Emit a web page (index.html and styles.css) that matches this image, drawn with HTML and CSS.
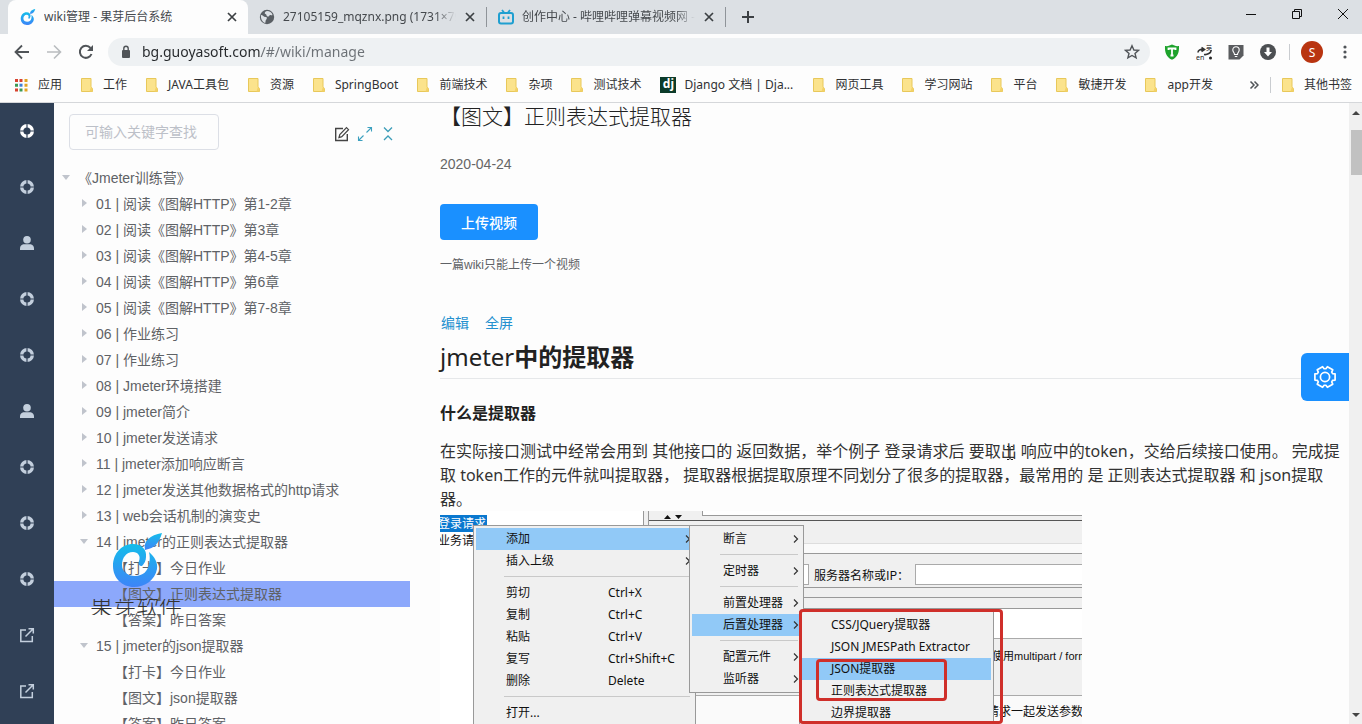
FILE: index.html
```
<!DOCTYPE html>
<html lang="zh-CN">
<head>
<meta charset="utf-8">
<title>wiki管理 - 果芽后台系统</title>
<link rel="stylesheet" href="styles.css">
</head>
<body>
<svg class="defs" aria-hidden="true">
  <defs>
    <linearGradient id="leaf" x1="0" y1="0" x2="0" y2="1"><stop offset="0" stop-color="#14bdea"/><stop offset="1" stop-color="#3d84f8"/></linearGradient>
    <symbol id="i-close" viewBox="0 0 12 12"><path d="M2 2l8 8M10 2l-8 8" stroke="currentColor" stroke-width="1.7" fill="none"/></symbol>
    <symbol id="i-logo" viewBox="0 0 49 54">
      <path d="M36 19C42 24 45 30 44 36C42 47 32 54 21 54C9 54 0 45 0 33C0 20 9 11 20 11C29 11 34 17 33 24C33 28 31 31 29 33C26 33 25 31 26 28C28 23 25 19 20 19C13 19 9 25 9 32C9 39 15 43 22 43C30 43 35 38 36 31C37 27 37 23 36 19Z" fill="url(#leaf)"/>
      <path d="M32 17C30 8 37 2 49 0C46 10 42 15 32 17Z" fill="url(#leaf)"/>
    </symbol>
    <symbol id="i-folder" viewBox="0 0 12 14"><path d="M.5.5h9.500v8l1.500 2.500v2.500H.5z" fill="#fbe38c" stroke="#e8c85a"/><path d="M8.500 13.500l1.500-5 1.500 2.500v2.500z" fill="#f3d268"/></symbol>
    <symbol id="i-ring" viewBox="0 0 16 16"><circle cx="8" cy="8" r="5.300" fill="none" stroke="currentColor" stroke-width="3.400"/><path d="M8 .5v5M8 10.500v5M.5 8h5M10.500 8h5" stroke="#304056" stroke-width="1.200"/></symbol>
    <symbol id="i-user" viewBox="0 0 16 16"><circle cx="8" cy="4.800" r="3.800" fill="currentColor"/><path d="M1 15v-1.500C1 10.500 3.500 9.300 5 9.300h6c1.500 0 4 1.200 4 4.200V15z" fill="currentColor"/></symbol>
    <symbol id="i-out" viewBox="0 0 16 16"><path d="M7 3H1.800v11.500h11.500V9M6.500 9.500L14 2M9.500 1.700h4.800v4.800" fill="none" stroke="currentColor" stroke-width="1.500"/></symbol>
    <symbol id="i-chev" viewBox="0 0 6 10"><path d="M1 1.500l3.500 3.500L1 8.500" fill="none" stroke="#333" stroke-width="1.200"/></symbol>
  </defs>
</svg>

<header class="browser">
  <nav class="tabs" aria-label="标签页">
    <div class="tab tab-active">
      <svg class="ico16"><use href="#i-logo"/></svg>
      <span class="tab-title">wiki管理 - 果芽后台系统</span>
      <button class="tab-close" aria-label="关闭"><svg class="ico12"><use href="#i-close"/></svg></button>
    </div>
    <div class="tab">
      <svg class="ico16" viewBox="0 0 16 16"><circle cx="8" cy="8" r="7.200" fill="#5a5f64"/><path d="M2 6c2 0 2.500 2 4.500 2s1.500 2 .5 3-0 2.500-1 3C3.500 13 1.500 10 2 6zM8 2c2.500 0 5 1.500 5.500 4-1 1-1.500-.5-2.500 0s-1 2-2.500 1.500S8 5.500 6.500 5 6 2.500 8 2z" fill="#dde1e5"/></svg>
      <span class="tab-title fade">27105159_mqznx.png (1731×793)</span>
      <button class="tab-close" aria-label="关闭"><svg class="ico12"><use href="#i-close"/></svg></button>
    </div>
    <div class="tab">
      <svg class="ico16" viewBox="0 0 16 16"><rect x="1" y="4" width="14" height="10.500" rx="2" fill="none" stroke="#1f9fd0" stroke-width="2"/><path d="M4 1l2 2.500M12 1l-2 2.500M5.500 7.500v2.500M10.500 7.500v2.500" stroke="#1f9fd0" stroke-width="1.800"/></svg>
      <span class="tab-title fade">创作中心 - 哔哩哔哩弹幕视频网 - ( ゜</span>
      <button class="tab-close" aria-label="关闭"><svg class="ico12"><use href="#i-close"/></svg></button>
    </div>
    <button class="newtab" aria-label="新标签页"><svg class="ico14" viewBox="0 0 14 14"><path d="M7 1v12M1 7h12" stroke="#3c4043" stroke-width="2"/></svg></button>
    <div class="window-buttons">
      <button aria-label="最小化"><svg class="ico12" viewBox="0 0 12 12"><path d="M1 6.500h10" stroke="#111"/></svg></button>
      <button aria-label="还原"><svg class="ico12" viewBox="0 0 12 12"><path d="M1.500 3.500h7v7h-7zM3.500 3.500v-2h7v7h-2" fill="none" stroke="#111"/></svg></button>
      <button aria-label="关闭窗口"><svg class="ico12" viewBox="0 0 12 12"><path d="M1 1l10 10M11 1L1 11" stroke="#111"/></svg></button>
    </div>
  </nav>

  <div class="toolbar">
    <button aria-label="后退"><svg class="ico16" viewBox="0 0 16 16"><path d="M15 8H2M8 1.500L1.500 8 8 14.500" fill="none" stroke="#505458" stroke-width="1.800"/></svg></button>
    <button aria-label="前进"><svg class="ico16" viewBox="0 0 16 16"><path d="M1 8h13M8 1.500L14.500 8 8 14.500" fill="none" stroke="#b9bcbf" stroke-width="1.600"/></svg></button>
    <button aria-label="重新加载"><svg class="ico16" viewBox="0 0 16 16"><path d="M13.500 10A6 6 0 1 1 12.500 4" fill="none" stroke="#505458" stroke-width="2"/><path d="M15 1v6H9z" fill="#505458"/></svg></button>
    <div class="omnibox">
      <svg class="lock" viewBox="0 0 10 14"><rect x="1" y="5" width="8" height="8" rx="1" fill="#505458"/><path d="M2.800 5.500V3.500a2.200 2.200 0 0 1 4.400 0v2" fill="none" stroke="#505458" stroke-width="1.400"/></svg>
      <input class="url" type="text" aria-label="地址" value="bg.guoyasoft.com/#/wiki/manage">
      <button aria-label="收藏"><svg class="ico16" viewBox="0 0 16 16"><path d="M8 1.800l1.900 4.200 4.600.4-3.500 3 1.100 4.500L8 11.500l-4.100 2.400L5 9.400l-3.500-3 4.600-.4z" fill="none" stroke="#505458" stroke-width="1.400"/></svg></button>
    </div>
    <div class="extensions">
      <button aria-label="扩展 T"><svg class="ico16" viewBox="0 0 16 16"><path d="M1 2c3 .5 5-.5 7-1.500C10 1.500 12 2.500 15 2c.3 6-1 11-7 13.800C2 13 .7 8 1 2z" fill="#1ea32c"/><path d="M4.500 6v-1.500h7V6M8 4v7.500M6.500 11.500h3" fill="none" stroke="#fff" stroke-width="1.800"/></svg></button>
      <button aria-label="翻译"><svg class="ico16" viewBox="0 0 16 16"><path d="M2 8.500c0-2 2-3.500 5-3M5.500 3.500l3 2-3 2M15 6c.5 3-4 5-7 4.500" fill="none" stroke="#333" stroke-width="1.600"/><circle cx="14.500" cy="14" r="1.500" fill="#222"/><text x="0" y="15.500" font-size="7" font-family="Noto Sans" fill="#222">en</text><text x="10" y="6" font-size="6" font-family="Noto Sans CJK SC" fill="#222">英</text></svg></button>
      <button aria-label="灯泡"><svg class="ico16" viewBox="0 0 16 16"><path d="M.5 1h15v10.500L11.500 15.500H.5z" fill="#5a5c5f"/><path d="M6.500 10.500C6.500 8.500 4.800 8 4.800 6a3.200 3.200 0 0 1 6.400 0c0 2-1.700 2.500-1.700 4.500zM6.800 12.500h2.500" fill="none" stroke="#fff" stroke-width="1.100"/></svg></button>
      <button aria-label="下载"><svg class="ico16" viewBox="0 0 16 16"><circle cx="8" cy="8" r="8" fill="#4c4f52"/><path d="M6.500 3.500h3V8H12l-4 4.500L4 8h2.500z" fill="#fff"/></svg></button>
    </div>
    <span class="divider"></span>
    <button class="avatar" aria-label="账户">S</button>
    <button aria-label="菜单"><svg class="ico16" viewBox="0 0 16 16"><circle cx="8" cy="3" r="1.600" fill="#505458"/><circle cx="8" cy="8" r="1.600" fill="#505458"/><circle cx="8" cy="13" r="1.600" fill="#505458"/></svg></button>
  </div>

  <nav class="bookmarks" aria-label="书签">
    <a href="#"><svg class="ico14" viewBox="0 0 14 14"><path d="M1 2.500h3M1 12h3" stroke="#d8432f" stroke-width="3"/><path d="M5.500 2.500h3" stroke="#d8432f" stroke-width="3"/><path d="M10.500 2.500h3M10.500 7.200h3" stroke="#e2a424" stroke-width="3"/><path d="M1 7.200h3M5.500 12h3" stroke="#3c9a54" stroke-width="3"/><path d="M5.500 7.200h3" stroke="#3f7fd8" stroke-width="3"/><path d="M10.500 12h3" stroke="#e2a424" stroke-width="3"/></svg>应用</a>
    <a href="#"><svg class="folder"><use href="#i-folder"/></svg>工作</a>
    <a href="#"><svg class="folder"><use href="#i-folder"/></svg>JAVA工具包</a>
    <a href="#"><svg class="folder"><use href="#i-folder"/></svg>资源</a>
    <a href="#"><svg class="folder"><use href="#i-folder"/></svg>SpringBoot</a>
    <a href="#"><svg class="folder"><use href="#i-folder"/></svg>前端技术</a>
    <a href="#"><svg class="folder"><use href="#i-folder"/></svg>杂项</a>
    <a href="#"><svg class="folder"><use href="#i-folder"/></svg>测试技术</a>
    <a class="django" href="#"><span class="dj">dj</span>Django 文档 | Dja...</a>
    <a href="#"><svg class="folder"><use href="#i-folder"/></svg>网页工具</a>
    <a href="#"><svg class="folder"><use href="#i-folder"/></svg>学习网站</a>
    <a href="#"><svg class="folder"><use href="#i-folder"/></svg>平台</a>
    <a href="#"><svg class="folder"><use href="#i-folder"/></svg>敏捷开发</a>
    <a href="#"><svg class="folder"><use href="#i-folder"/></svg>app开发</a>
    <div class="bookmarks-end">
      <button aria-label="更多书签"><svg class="ico10" viewBox="0 0 10 10"><path d="M1.500 1.500L5 5 1.500 8.500M5.500 1.500L9 5 5.500 8.500" fill="none" stroke="#505458" stroke-width="1.500"/></svg></button>
      <span class="divider"></span>
      <a href="#"><svg class="folder"><use href="#i-folder"/></svg>其他书签</a>
    </div>
  </nav>
</header>

<div class="page">
  <nav class="rail" aria-label="主菜单">
    <a class="current" href="#" aria-label="首页"><svg class="ico16"><use href="#i-ring"/></svg></a>
    <a href="#" aria-label="课程"><svg class="ico16"><use href="#i-ring"/></svg></a>
    <a href="#" aria-label="用户"><svg class="ico16"><use href="#i-user"/></svg></a>
    <a href="#" aria-label="班级"><svg class="ico16"><use href="#i-ring"/></svg></a>
    <a href="#" aria-label="题库"><svg class="ico16"><use href="#i-ring"/></svg></a>
    <a href="#" aria-label="学员"><svg class="ico16"><use href="#i-user"/></svg></a>
    <a href="#" aria-label="作业"><svg class="ico16"><use href="#i-ring"/></svg></a>
    <a href="#" aria-label="文档"><svg class="ico16"><use href="#i-ring"/></svg></a>
    <a href="#" aria-label="系统"><svg class="ico16"><use href="#i-ring"/></svg></a>
    <a href="#" aria-label="外链一"><svg class="ico16"><use href="#i-out"/></svg></a>
    <a href="#" aria-label="外链二"><svg class="ico16"><use href="#i-out"/></svg></a>
  </nav>

  <aside class="catalog">
    <div class="search-row">
      <input class="search" type="text" placeholder="可输入关键字查找" aria-label="可输入关键字查找">
      <div class="tools">
        <button aria-label="编辑目录"><svg class="ico16" viewBox="0 0 16 16"><path d="M9 2.500H1.700v12h11.600V8" fill="none" stroke="#444" stroke-width="1.400"/><path d="M5 11.500l.8-3L12.500 1.700l2 2-6.700 6.900z" fill="none" stroke="#444" stroke-width="1.200"/></svg></button>
        <button aria-label="全部展开"><svg class="ico16" viewBox="0 0 16 16"><path d="M9.500 6.500L14.500 1.500M10.500 1.500h4v4M6.500 9.500L1.500 14.500M1.500 10.500v4h4" fill="none" stroke="#3ca0bf" stroke-width="1.100"/></svg></button>
        <button aria-label="全部收起"><svg class="ico16" viewBox="0 0 16 16"><path d="M4 1.500l4 4 4-4M4 14l4-4 4 4" fill="none" stroke="#3c9db8" stroke-width="1.300"/></svg></button>
      </div>
    </div>
    <ul class="tree">
      <li class="row"><button class="caret open" aria-label="收起"></button>《Jmeter训练营》</li>
      <li class="row l1"><button class="caret" aria-label="展开"></button>01 | 阅读《图解HTTP》第1-2章</li>
      <li class="row l1"><button class="caret" aria-label="展开"></button>02 | 阅读《图解HTTP》第3章</li>
      <li class="row l1"><button class="caret" aria-label="展开"></button>03 | 阅读《图解HTTP》第4-5章</li>
      <li class="row l1"><button class="caret" aria-label="展开"></button>04 | 阅读《图解HTTP》第6章</li>
      <li class="row l1"><button class="caret" aria-label="展开"></button>05 | 阅读《图解HTTP》第7-8章</li>
      <li class="row l1"><button class="caret" aria-label="展开"></button>06 | 作业练习</li>
      <li class="row l1"><button class="caret" aria-label="展开"></button>07 | 作业练习</li>
      <li class="row l1"><button class="caret" aria-label="展开"></button>08 | Jmeter环境搭建</li>
      <li class="row l1"><button class="caret" aria-label="展开"></button>09 | jmeter简介</li>
      <li class="row l1"><button class="caret" aria-label="展开"></button>10 | jmeter发送请求</li>
      <li class="row l1"><button class="caret" aria-label="展开"></button>11 | jmeter添加响应断言</li>
      <li class="row l1"><button class="caret" aria-label="展开"></button>12 | jmeter发送其他数据格式的http请求</li>
      <li class="row l1"><button class="caret" aria-label="展开"></button>13 | web会话机制的演变史</li>
      <li class="row l1"><button class="caret open" aria-label="收起"></button>14 | jmeter的正则表达式提取器</li>
      <li class="row l2">【打卡】今日作业</li>
      <li class="row l2 selected">【图文】正则表达式提取器</li>
      <li class="row l2">【答案】昨日答案</li>
      <li class="row l1"><button class="caret open" aria-label="收起"></button>15 | jmeter的json提取器</li>
      <li class="row l2">【打卡】今日作业</li>
      <li class="row l2">【图文】json提取器</li>
      <li class="row l2">【答案】昨日答案</li>
    </ul>
    <div class="watermark">
      <svg class="mark"><use href="#i-logo"/></svg>
      <span class="mark-name">果芽软件</span>
    </div>
  </aside>

  <main class="article">
    <h1 class="title">【图文】正则表达式提取器</h1>
    <p class="date">2020-04-24</p>
    <button class="upload">上传视频</button>
    <p class="hint">一篇wiki只能上传一个视频</p>
    <div class="links"><a href="#">编辑</a><a href="#">全屏</a></div>
    <h2 class="heading"><span class="latin">jmeter</span>中的提取器</h2>
    <h3 class="subheading">什么是提取器</h3>
    <p class="body">在实际接口测试中经常会用到 其他接口的 返回数据，举个例子 登录请求后 要取出 响应中的token，交给后续接口使用。 完成提取 token工作的元件就叫提取器， 提取器根据提取原理不同划分了很多的提取器，最常用的 是 正则表达式提取器 和 json提取器。</p>

    <div class="shot">
      <div class="plan"><span class="plan-on">登录请求</span><span>业务请求</span></div>
      <div class="split"></div>
      <div class="form">
        <div class="form-top"><svg class="sorts" viewBox="0 0 20 6"><path d="M1 5l3.500-4L8 5zM12 1h7l-3.500 4z" fill="#111"/></svg><span class="form-top-field"></span></div>
        <div class="band band-a"></div>
        <div class="band band-gap"></div>
        <div class="band band-server">
          <input class="port" type="text" aria-label="协议">
          <label for="ip">服务器名称或IP：</label>
          <input class="ip" id="ip" type="text">
        </div>
        <div class="band band-b"></div>
        <div class="band band-c"></div>
        <div class="band band-white"></div>
        <div class="band band-multi">使用multipart / form-data</div>
        <div class="band band-params">请求一起发送参数:</div>
      </div>

      <div class="menu menu-1">
        <div class="item on">添加<svg class="chev"><use href="#i-chev"/></svg></div>
        <div class="item">插入上级<svg class="chev"><use href="#i-chev"/></svg></div>
        <hr>
        <div class="item">剪切<kbd>Ctrl+X</kbd></div>
        <div class="item">复制<kbd>Ctrl+C</kbd></div>
        <div class="item">粘贴<kbd>Ctrl+V</kbd></div>
        <div class="item">复写<kbd>Ctrl+Shift+C</kbd></div>
        <div class="item">删除<kbd>Delete</kbd></div>
        <hr>
        <div class="item">打开...</div>
      </div>
      <div class="menu menu-2">
        <div class="item">断言<svg class="chev"><use href="#i-chev"/></svg></div>
        <hr>
        <div class="item">定时器<svg class="chev"><use href="#i-chev"/></svg></div>
        <hr>
        <div class="item">前置处理器<svg class="chev"><use href="#i-chev"/></svg></div>
        <div class="item on">后置处理器<svg class="chev"><use href="#i-chev"/></svg></div>
        <hr>
        <div class="item">配置元件<svg class="chev"><use href="#i-chev"/></svg></div>
        <div class="item">监听器<svg class="chev"><use href="#i-chev"/></svg></div>
      </div>
      <div class="menu menu-3">
        <div class="item">CSS/JQuery提取器</div>
        <div class="item">JSON JMESPath Extractor</div>
        <div class="item on">JSON提取器</div>
        <div class="item">正则表达式提取器</div>
        <div class="item">边界提取器</div>
      </div>
      <div class="frame frame-outer"></div>
      <div class="frame frame-inner"></div>
    </div>
  </main>

  <div class="scrollbar"><svg class="scroll-up" viewBox="0 0 8 5"><path d="M0 5l4-4 4 4z" fill="#444"/></svg><div class="thumb"></div><svg class="scroll-down" viewBox="0 0 8 5"><path d="M0 0l4 4 4-4z" fill="#444"/></svg></div>

  <button class="settings" aria-label="设置"><svg class="gear" viewBox="0 0 24 24"><path d="M22.100 8.900V15.100L19.600 15.400 18.700 16.900 19.750 19.200 14.400 22.300 12.900 20.250H11.100L9.600 22.300 4.250 19.200 5.300 16.900 4.400 15.400 1.900 15.100V8.900L4.400 8.600 5.300 7.100 4.250 4.800 9.600 1.700 11.100 3.750H12.900L14.400 1.700 19.750 4.800 18.700 7.100 19.600 8.600Z" fill="none" stroke="#fff" stroke-width="1.700" stroke-linejoin="round"/><circle cx="12" cy="12" r="4.600" fill="none" stroke="#fff" stroke-width="1.700"/></svg></button>
  <svg class="ibeam" viewBox="0 0 8 16"><path d="M1 1.500h2l1 1 1-1h2M4 2.500v11M1 14.500h2l1-1 1 1h2" fill="none" stroke="#222"/></svg>
</div>
</body>
</html>
```

FILE: styles.css
```
* { box-sizing: border-box; }

body {
  margin: 0;
  height: 100vh;
  display: flex;
  flex-direction: column;
  overflow: hidden;
  background: #fdfdfd;
  color: #303133;
  font-family: "Noto Sans", "Noto Sans CJK SC", sans-serif;
  font-size: 12px;
}

button {
  border: 0;
  padding: 0;
  background: none;
  font: inherit;
  color: inherit;
  display: flex;
  align-items: center;
  justify-content: center;
}

a { text-decoration: none; color: inherit; }
h1, h2, h3, p, ul { margin: 0; padding: 0; }

.defs { position: absolute; width: 0; height: 0; }
.ico10 { width: 10px; height: 10px; }
.ico12 { width: 12px; height: 12px; }
.ico14 { width: 14px; height: 14px; }
.ico16 { width: 16px; height: 16px; flex: none; }

/* browser chrome */
.browser { flex: none; border-bottom: 1px solid #d5d7da; }

.tabs {
  display: flex;
  height: 34px;
  padding-left: 8px;
  background: #dce0e4;
  color: #45494d;
}

.tab {
  display: flex;
  align-items: center;
  gap: 8px;
  width: 239px;
  height: 20px;
  margin-top: 7px;
  padding: 0 10px 0 11px;
  border-right: 1px solid #8f9499;
}
.tab-active {
  width: 240px;
  height: 34px;
  margin-top: 0;
  padding-left: 12px;
  border: 0;
  border-radius: 8px 8px 0 0;
  background: #fdfdfd;
}
.tab-title { flex: 1; overflow: hidden; white-space: nowrap; line-height: 20px; }
.fade { mask-image: linear-gradient(to right, #000 88%, transparent); }
.tab-close { color: #3c4043; }
.newtab { width: 44px; }
.window-buttons { display: flex; margin: 0 -4px 0 auto; height: 28px; }
.window-buttons button { width: 46px; }

.toolbar {
  display: flex;
  align-items: center;
  gap: 16px;
  height: 36px;
  padding: 0 9px 0 14px;
}
.omnibox {
  flex: 1;
  display: flex;
  align-items: center;
  gap: 11px;
  height: 28px;
  margin: 0 -2px;
  padding: 0 10px 0 13px;
  border-radius: 14px;
  background: #eef1f3;
}
.lock { width: 10px; height: 14px; }
.url {
  flex: 1;
  border: 0;
  padding: 0;
  font-family: "Noto Sans", sans-serif;
  font-size: 14px;
  line-height: 20px;
  color: #6b7075;
  -webkit-text-fill-color: transparent;
  background: linear-gradient(to right, #25282b 119px, #6b7075 119px);
  -webkit-background-clip: text;
  background-clip: text;
}
.extensions { display: flex; gap: 16px; }
.divider { width: 1px; height: 16px; background: #c9ccd0; }
.toolbar .divider { margin: 0 -5px 0 -3px; }
.avatar {
  width: 22px;
  height: 22px;
  margin-right: -2px;
  border-radius: 50%;
  background: #b93410;
  color: #fff;
}

.bookmarks {
  display: flex;
  align-items: center;
  gap: 19px;
  height: 32px;
  padding: 0 10px 3px 14px;
  white-space: nowrap;
}
.bookmarks a { display: flex; align-items: center; gap: 10px; line-height: 20px; }
.folder { width: 12px; height: 14px; flex: none; }
.django { width: 134px; }
.bookmarks .django { gap: 8px; }
.dj {
  width: 16px;
  height: 16px;
  background: #0c3b2a;
  color: #fff;
  font-weight: 700;
  line-height: 14px;
  text-align: center;
}
.bookmarks-end { display: flex; align-items: center; gap: 11px; margin-left: auto; }

/* application */
.page { position: relative; flex: 1; min-height: 0; display: flex; }

.rail { flex: none; width: 54px; background: #304056; color: #c3cfdd; overflow: hidden; }
.rail a { display: flex; align-items: center; justify-content: center; height: 56px; }
.rail .current { color: #fff; }

.catalog {
  position: relative;
  flex: none;
  width: 356px;
  overflow: hidden;
  color: #5f6266;
  font-family: "Liberation Sans", "Noto Sans CJK SC", sans-serif;
  font-size: 14px;
}
.search-row { display: flex; justify-content: space-between; padding: 11px 14px 15px 15px; }
.search {
  width: 150px;
  height: 36px;
  padding: 0 15px;
  border: 1px solid #dcdfe6;
  border-radius: 4px;
  background: none;
  font: inherit;
}
.search::placeholder { color: #bcc0c8; opacity: 1; }
.tools { display: flex; align-items: center; gap: 7px; padding-top: 4px; }

.tree { list-style: none; }
.row { display: flex; align-items: center; height: 26px; padding-bottom: 2px; white-space: nowrap; }
.l1 { padding-left: 18px; }
.l2 { padding-left: 60px; }
.selected { background: #8ca8fb; }
.caret { width: 24px; height: 24px; }
.caret::before {
  content: "";
  border: 4px solid transparent;
  border-left: 5px solid #c0c4cc;
  border-right: 0;
}
.caret.open::before {
  border: 4px solid transparent;
  border-top: 5px solid #c0c4cc;
  border-bottom: 0;
}

.watermark { position: absolute; left: 36px; top: 430px; display: flex; flex-direction: column; }
.mark { width: 49px; height: 54px; margin-left: 23px; }
.mark-name {
  height: 16px;
  margin-top: 12px;
  overflow: hidden;
  color: #333;
  font-size: 23px;
  font-weight: 300;
  line-height: 16px;
}

.article { flex: 1; min-width: 0; padding: 0 4px 0 30px; overflow: hidden; }
.title { font-size: 21px; line-height: 26px; font-weight: 300; color: #222; }
.date, .hint, .upload, .links { font-family: "Liberation Sans", "Noto Sans CJK SC", sans-serif; }
.date { margin-top: 25px; font-size: 14px; line-height: 20px; color: #666; }
.upload {
  height: 36px;
  margin-top: 30px;
  padding: 0 21px;
  border-radius: 4px;
  background: #1a90ff;
  color: #fff;
  font-size: 14px;
  font-weight: 500;
}
.hint { margin-top: 15px; line-height: 20px; color: #5f6266; }
.links { display: flex; gap: 16px; margin-top: 37px; padding-left: 1px; font-size: 14px; line-height: 22px; color: #2490cf; }
.heading {
  margin-top: 6px;
  padding-bottom: 4px;
  border-bottom: 1px solid #e6e8ea;
  font-size: 24px;
  line-height: 34px;
  color: #222;
}
.latin { font-weight: 400; -webkit-text-stroke: 0 #222; }
.subheading { margin-top: 22px; font-size: 16px; line-height: 24px; color: #222; }
.body { margin-top: 14px; font-size: 16px; line-height: 24px; color: #333; }

/* captured JMeter window: panes below, free-floating menus above */
.shot {
  position: relative;
  display: flex;
  width: 642px;
  height: 214px;
  overflow: hidden;
  background: #fff;
  color: #111;
}
.plan { width: 203px; padding-top: 4px; display: flex; flex-direction: column; align-items: flex-start; }
.plan span { line-height: 17px; text-indent: -2px; overflow: hidden; }
.plan .plan-on { width: 47px; background: #0a78cf; color: #fff; }
.split { width: 6px; border: solid #999; border-width: 0 1px; background: #f0f0f0; }
.form { flex: 1; min-width: 0; background: #f0f0f0; white-space: nowrap; }
.form-top { display: flex; height: 10px; padding-left: 14px; border-bottom: 1px solid #555; }
.sorts { width: 20px; height: 6px; margin-top: 3px; }
.form-top-field { flex: 1; height: 5px; margin-left: 19px; background: #fff; border: solid #999; border-width: 0 0 1px 1px; }
.band-a { height: 23px; border-bottom: 1px solid #ddd; }
.band-gap { height: 10px; background: #fafafa; border-bottom: 1px solid #999; }
.band-server {
  display: flex;
  align-items: center;
  height: 34px;
  padding: 8px 0 0 60px;
  border-bottom: 1px solid #999;
  font-family: "Noto Sans CJK SC", sans-serif;
}
.band-server input { height: 21px; border: 1px solid #aaa; background: #fff; padding: 0; }
.port { width: 100px; margin-right: 5px; }
.ip { flex: 1; min-width: 0; border-right: 0; }
.band-server .ip { border-right: 0; }
.band-server label { width: 101px; }
.band-b { height: 10px; border-bottom: 1px solid #999; }
.band-c { height: 11px; border-bottom: 1px solid #999; }
.band-white { height: 30px; background: #fff; border-bottom: 1px solid #aaa; }
.band-multi {
  height: 57px;
  padding: 7px 0 0 343px;
  border-bottom: 1px solid #aaa;
  font-family: "Liberation Sans", "Noto Sans CJK SC", sans-serif;
  font-size: 11px;
  line-height: 20px;
}
.band-params { height: 30px; padding: 6px 0 0 338px; background: #fafafa; line-height: 20px; }

.menu { position: absolute; padding: 2px; border: 1px solid #999; background: #f0f0f0; }
.menu-1 { left: 33px; top: 14px; width: 223px; }
.menu-2 { left: 249px; top: 14px; width: 115px; }
.menu-3 { left: 359px; top: 100px; width: 195px; }
.item { display: flex; align-items: center; height: 22px; padding-left: 30px; line-height: 22px; white-space: nowrap; }
.menu-1 .on { width: 216px; }
.menu-2 .item, .menu-1 .item { justify-content: space-between; }
.menu-2 .item { padding: 0 2px 0 31px; }
.menu-3 .item { padding-left: 29px; }
.menu-1 .item { padding-right: 2px; }
.menu-1 .on { padding-right: 1px; }
.item.on { background: #91c9f7; }
.menu kbd { width: 79px; margin-right: 4px; font: inherit; }
.menu hr { height: 1px; margin: 4px 3px 5px 28px; border: 0; background: #c9c9c9; }
.chev { width: 6px; height: 10px; }
.frame { position: absolute; border: 3px solid #cf2f2a; border-radius: 4px; }
.frame-outer { left: 359px; top: 98px; width: 204px; height: 115px; }
.frame-inner { left: 376px; top: 148px; width: 131px; height: 42px; }

.scrollbar { flex: none; display: flex; flex-direction: column; width: 13px; padding: 7px 0 6px; background: #f0f0f0; }
.scroll-up, .scroll-down { display: block; width: 8px; height: 5px; margin: 0 3px; }
.scroll-down { margin-top: auto; }
.thumb { height: 45px; margin: 15px 0 0 2px; background: #c1c1c1; }

.settings {
  position: absolute;
  right: 13px;
  top: 250px;
  width: 48px;
  height: 48px;
  border-radius: 6px 0 0 6px;
  background: #1a90ff;
}
.gear { width: 24px; height: 24px; }
.ibeam { position: absolute; left: 1006px; top: 342px; width: 8px; height: 16px; }
```
